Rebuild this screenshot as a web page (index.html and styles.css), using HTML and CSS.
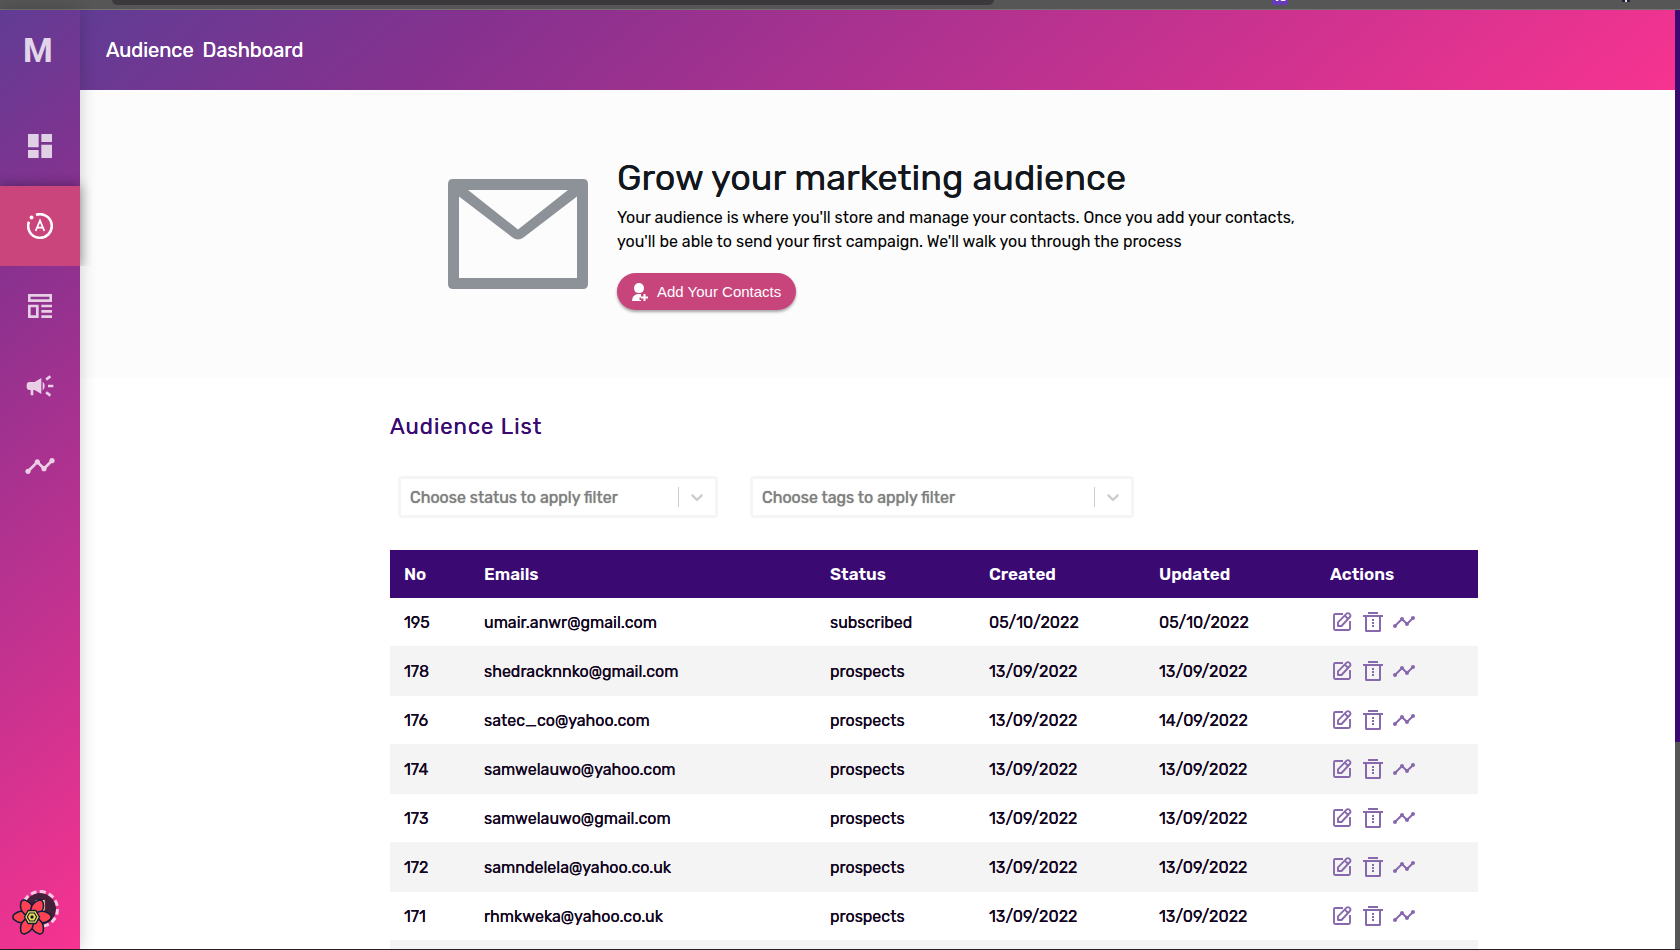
FILE: index.html
```html
<!DOCTYPE html>
<html lang="en">
<head>
    <meta charset="UTF-8">
    <meta name="viewport" content="width=device-width, initial-scale=1.0">
    <title>Audience Dashboard</title>
    <link rel="stylesheet" href="styles.css">
</head>
<body>
    <!-- shared icons -->
    <svg class="icon-defs" aria-hidden="true">
        <symbol id="icon-timeline" viewBox="0 0 24 24">
            <path d="M23 8c0 1.1-.9 2-2 2-.18 0-.35-.02-.51-.07l-3.56 3.55c.05.16.07.34.07.52 0 1.1-.9 2-2 2s-2-.9-2-2c0-.18.02-.36.07-.52l-2.55-2.55c-.16.05-.34.07-.52.07s-.36-.02-.52-.07l-4.55 4.56c.05.16.07.33.07.51 0 1.1-.9 2-2 2s-2-.9-2-2 .9-2 2-2c.18 0 .35.02.51.07l4.56-4.55C8.02 9.36 8 9.18 8 9c0-1.1.9-2 2-2s2 .9 2 2c0 .18-.02.36-.07.52l2.55 2.55c.16-.05.34-.07.52-.07s.36.02.52.07l3.55-3.56C19.02 8.35 19 8.18 19 8c0-1.1.9-2 2-2s2 .9 2 2z"/>
        </symbol>
        <symbol id="icon-edit" viewBox="0 0 24 24">
            <g fill="none" stroke="currentColor" stroke-width="1.9" stroke-linejoin="round">
                <path d="M13 4H5.200Q4 4 4 5.200v13.600Q4 20 5.200 20h13.600q1.200 0 1.200-1.200V11"/>
                <path d="M8 16v-3.700l8.600-8.600a1.900 1.900 0 0 1 2.700 0l.600.600a1.900 1.900 0 0 1 0 2.700L11.500 16z"/>
                <path d="M14.800 5.600l3.400 3.400"/>
            </g>
        </symbol>
        <symbol id="icon-trash" viewBox="0 0 24 24">
            <path d="M7 2h10v2H7zM2 5h20v2h-2v13.500q0 1.500-1.500 1.500h-13Q4 22 4 20.500V7H2zm4 2v13h12V7zM11 9h2v2h-2zM11 12h2v2h-2zM11 15h2v2h-2z"/>
        </symbol>
        <symbol id="icon-chevron" viewBox="0 0 20 20">
            <path d="M4.516 7.548c0.436-0.446 1.043-0.481 1.576 0l3.908 3.747 3.908-3.747c0.533-0.481 1.141-0.446 1.574 0 0.436 0.445 0.408 1.197 0 1.615-0.406 0.418-4.695 4.502-4.695 4.502-0.217 0.223-0.502 0.335-0.787 0.335s-0.570-0.112-0.789-0.335c0 0-4.287-4.084-4.695-4.502s-0.436-1.170 0-1.615z"/>
        </symbol>
    </svg>

    <div class="browser-bar">
        <div class="address"></div>
        <div class="ext-badge">10</div>
        <div class="ext-dot"></div>
    </div>

    <div class="app">
        <nav class="sidebar">
            <a href="#" class="logo">M</a>
            <a href="#" class="nav-item" aria-label="Dashboard">
                <svg viewBox="0 0 24 24"><path d="M3 13h8V3H3v10zm0 8h8v-6H3v6zm10 0h8V11h-8v10zm0-18v6h8V3h-8z"/></svg>
            </a>
            <a href="#" class="nav-item active" aria-label="Audience">
                <svg viewBox="0 0 24 24">
                    <g fill="none" stroke="currentColor">
                        <path d="M8.300 1.750A10.900 10.900 0 1 1 1.800 8.100" stroke-width="2.400"/>
                        <path d="M8 16.500L12 7l4 9.500M9.400 13.400h5.200" stroke-width="1.600"/>
                    </g>
                    <circle cx="4.200" cy="4.200" r="1.800"/>
                </svg>
            </a>
            <a href="#" class="nav-item" aria-label="Templates">
                <svg viewBox="0 0 24 24"><path fill-rule="evenodd" d="M3 3h18v6H3zm2 2v2h14V5zM3 11h8v10H3zm2 2v6h4v-6zM13 11h8v2h-8zM13 15h8v2h-8zM13 19h8v2h-8z"/></svg>
            </a>
            <a href="#" class="nav-item" aria-label="Campaigns">
                <svg viewBox="0 0 24 24"><path d="M18 11v2h4v-2h-4zm-2 6.610c.960.710 2.210 1.650 3.200 2.390.400-.530.800-1.070 1.200-1.600-.990-.740-2.240-1.680-3.200-2.400-.400.540-.800 1.080-1.200 1.610zM20.400 5.600c-.400-.530-.800-1.070-1.200-1.600-.990.740-2.240 1.680-3.200 2.400.400.530.800 1.070 1.200 1.600.960-.720 2.210-1.650 3.200-2.400zM4 9c-1.100 0-2 .900-2 2v2c0 1.100.900 2 2 2h1v4h2v-4h1l5 3V6L8 9H4zm11.500 3c0-1.330-.580-2.530-1.500-3.350v6.690c.920-.810 1.500-2.010 1.500-3.340z"/></svg>
            </a>
            <a href="#" class="nav-item" aria-label="Reports">
                <svg><use href="#icon-timeline"/></svg>
            </a>
            <div class="avatar">J</div>
            <button type="button" class="devtools" aria-label="Open query devtools">
                <svg viewBox="0 0 40 38">
                    <g fill="#ff4154" stroke="#0b1f3a" stroke-width="1.500" stroke-linejoin="round">
                        <path id="petal" d="M20 19L14 14Q7 11.500 1.500 17Q0 19 1.500 21Q7 26.500 14 24z"/>
                        <use href="#petal" transform="rotate(60 20 19)"/>
                        <use href="#petal" transform="rotate(120 20 19)"/>
                        <use href="#petal" transform="rotate(180 20 19)"/>
                        <use href="#petal" transform="rotate(240 20 19)"/>
                        <use href="#petal" transform="rotate(300 20 19)"/>
                    </g>
                    <path d="M12.500 19l3.700-6.500h7.600l3.700 6.500-3.700 6.500h-7.600z" fill="#f5dc55" stroke="#0b1f3a" stroke-width="1.400"/>
                    <path d="M15.300 19l2.300-4h4.800l2.300 4-2.300 4h-4.800z" fill="none" stroke="#0b1f3a" stroke-width="1.200"/>
                    <circle cx="20" cy="19" r="1.700" fill="#0b1f3a"/>
                </svg>
            </button>
        </nav>

        <main class="main">
            <header class="topbar">
                <span>Audience</span>
                <span>Dashboard</span>
            </header>

            <section class="hero">
                <svg class="hero-icon" viewBox="0 0 140 110">
                    <path fill-rule="evenodd" d="M5 0h130q5 0 5 5v100q0 5-5 5H5q-5 0-5-5V5Q0 0 5 0zM11 17.500V99h118V17.500L75.500 58.500q-5.500 4-11 0zM20 11l50 39.500L120 11z"/>
                </svg>
                <div class="hero-text">
                    <h1>Grow your marketing audience</h1>
                    <p>Your audience is where you'll store and manage your contacts. Once you add your contacts,<br>you'll be able to send your first campaign. We'll walk you through the process</p>
                    <button type="button" class="add-btn">
                        <svg viewBox="0 0 18 20"><path d="M8 1a5 5 0 0 1 5 5q0 5-5 5T3 6a5 5 0 0 1 5-5zM1 19q0-6 6-7h3v3.500H8.500V18H10v1zM12.500 12h2v2.500H17v2h-2.500V19h-2v-2.500H10v-2h2.500z"/></svg>
                        Add Your Contacts
                    </button>
                </div>
            </section>

            <section class="audience">
                <h2>Audience List</h2>
                <div class="filters">
                    <div class="filter status-filter">
                        <select aria-label="Status filter"><option>Choose status to apply filter</option></select>
                        <svg><use href="#icon-chevron"/></svg>
                    </div>
                    <div class="filter tags-filter">
                        <select aria-label="Tags filter"><option>Choose tags to apply filter</option></select>
                        <svg><use href="#icon-chevron"/></svg>
                    </div>
                </div>

                <table class="audience-table">
                    <colgroup>
                        <col class="col-no">
                        <col class="col-email">
                        <col class="col-status">
                        <col class="col-created">
                        <col class="col-updated">
                        <col class="col-actions">
                    </colgroup>
                    <thead>
                        <tr><th>No</th><th>Emails</th><th>Status</th><th>Created</th><th>Updated</th><th>Actions</th></tr>
                    </thead>
                    <tbody id="audienceRows"></tbody>
                </table>
            </section>
        </main>

        <div class="scrollbar"><div class="thumb"></div></div>
    </div>
    <div class="taskbar"></div>

    <script>
        const contacts = [
            ['195', 'umair.anwr@gmail.com', 'subscribed', '05/10/2022', '05/10/2022'],
            ['178', 'shedracknnko@gmail.com', 'prospects', '13/09/2022', '13/09/2022'],
            ['176', 'satec_co@yahoo.com', 'prospects', '13/09/2022', '14/09/2022'],
            ['174', 'samwelauwo@yahoo.com', 'prospects', '13/09/2022', '13/09/2022'],
            ['173', 'samwelauwo@gmail.com', 'prospects', '13/09/2022', '13/09/2022'],
            ['172', 'samndelela@yahoo.co.uk', 'prospects', '13/09/2022', '13/09/2022'],
            ['171', 'rhmkweka@yahoo.co.uk', 'prospects', '13/09/2022', '13/09/2022']
        ];

        const actions = `
            <div class="actions">
                <button type="button" aria-label="Edit"><svg><use href="#icon-edit"/></svg></button>
                <button type="button" aria-label="Delete"><svg><use href="#icon-trash"/></svg></button>
                <button type="button" aria-label="Activity"><svg><use href="#icon-timeline"/></svg></button>
            </div>`;

        const body = document.getElementById('audienceRows');
        contacts.forEach(function(contact) {
            const cells = contact.map(value => `<td>${value}</td>`).join('');
            body.insertAdjacentHTML('beforeend', `<tr>${cells}<td>${actions}</td></tr>`);
        });
        body.insertAdjacentHTML('beforeend', '<tr><td colspan="6"></td></tr>');
    </script>
</body>
</html>
```
FILE: styles.css
```css
* {
    margin: 0;
    padding: 0;
    box-sizing: border-box;
}

body {
    display: flex;
    flex-direction: column;
    height: 100vh;
    overflow: hidden;
    font-family: Rubik, Roboto, sans-serif;
    font-size: 16px;
    background: #fff;
    color: #000;
}

button {
    border: none;
    background: none;
    cursor: pointer;
}

svg {
    display: block;
    fill: currentColor;
}

.icon-defs {
    position: absolute;
    width: 0;
    height: 0;
}

/* browser strip */
.browser-bar {
    position: relative;
    flex: none;
    height: 10px;
    background: #565656;
    border-bottom: 1px solid #757570;
    overflow: hidden;
}

.address {
    width: 882px;
    height: 5px;
    margin-left: 112px;
    background: #3b393c;
    border-radius: 0 0 12px 12px;
}

.ext-badge {
    position: absolute;
    left: 1272px;
    bottom: 4px;
    width: 16px;
    height: 14px;
    border-radius: 2px;
    background: #673ab7;
    color: #fff;
    font-size: 12px;
    font-weight: 700;
    line-height: 13px;
    text-align: center;
}

.ext-dot {
    position: absolute;
    left: 1622px;
    top: 0;
    width: 8px;
    height: 2px;
    background: #dde;
    border: solid #223;
    border-width: 0 3px;
}

.app {
    display: flex;
    flex: 1;
    min-height: 0;
}

/* sidebar */
.sidebar {
    position: relative;
    z-index: 2;
    flex: none;
    width: 80px;
    background: linear-gradient(140deg, #613c94, #87318f 25%, #f73390);
    box-shadow: 0 0 16px rgba(0, 0, 0, 0.2);
}

.logo {
    display: flex;
    align-items: center;
    justify-content: center;
    height: 80px;
    margin-bottom: 16px;
    padding-right: 4px;
    color: #e2d5e9;
    font-family: Roboto, sans-serif;
    font-size: 34px;
    font-weight: 700;
    text-decoration: none;
}

.nav-item {
    display: flex;
    align-items: center;
    justify-content: center;
    height: 80px;
    color: rgba(255, 255, 255, 0.77);
}

.nav-item svg {
    width: 32px;
    height: 32px;
}

.nav-item.active {
    background: #c9457b;
    color: #fff;
    box-shadow: 0 0 12px rgba(0, 0, 0, 0.4);
    clip-path: inset(-12px -12px 0 0);
}

.nav-item.active svg {
    width: 26px;
    height: 26px;
}

.avatar {
    position: absolute;
    left: 21px;
    bottom: 21px;
    width: 38px;
    height: 38px;
    border: 3px dashed #f9c8e2;
    border-radius: 50%;
    background: #45203a;
    background-clip: padding-box;
    color: #e8d5e3;
    font-size: 18px;
    font-weight: 500;
    line-height: 28px;
    text-align: center;
}

.devtools {
    position: absolute;
    left: 12px;
    bottom: 13px;
    width: 40px;
    height: 38px;
}

.devtools svg {
    overflow: visible;
}

/* main */
.main {
    flex: 1;
    min-width: 0;
    overflow: hidden;
}

.topbar {
    display: flex;
    align-items: center;
    gap: 9px;
    height: 80px;
    padding-left: 26px;
    background: linear-gradient(140deg, #613c94, #87318f 25%, #f73390);
    color: #fff;
    font-size: 20px;
    text-shadow: 0 0 0 #fff;
}

.hero {
    display: flex;
    gap: 29px;
    height: 288px;
    padding: 66px 0 0 368px;
    background: #fcfcfc;
}

.hero-icon {
    flex: none;
    width: 140px;
    height: 110px;
    margin-top: 23px;
    color: #8d9299;
}

.hero h1 {
    color: #12171d;
    font-size: 36px;
    font-weight: 400;
    line-height: 44px;
    text-shadow: 0 0 0 #12171d;
}

.hero p {
    margin-top: 6px;
    font-size: 16px;
    line-height: 24px;
    white-space: nowrap;
}

.add-btn {
    display: flex;
    align-items: center;
    gap: 8px;
    height: 37px;
    margin-top: 19px;
    padding: 0 15px 0 14px;
    border-radius: 19px;
    background: #c8457c;
    box-shadow: 0 2px 3px rgba(0, 0, 0, 0.35);
    color: #fff;
    font-family: "Liberation Sans", Arial, sans-serif;
    font-size: 15px;
}

.add-btn svg {
    width: 18px;
    height: 20px;
}

.audience {
    padding: 36px 197px 0 310px;
}

.audience h2 {
    color: #3a0a72;
    font-size: 22px;
    font-weight: 400;
    line-height: 26px;
    letter-spacing: 1px;
    text-shadow: 0 0 0 #3a0a72;
}

.filters {
    display: flex;
    gap: 32px;
    margin: 36px 8px 32px;
}

.filter {
    position: relative;
    height: 42px;
}

.status-filter {
    width: 320px;
}

.tags-filter {
    width: 384px;
}

.filter select {
    appearance: none;
    width: 100%;
    height: 100%;
    padding: 0 50px 0 9px;
    border: 3px solid #f5f5f5;
    border-radius: 4px;
    background: #fff;
    color: #808080;
    font-family: inherit;
    font-size: 16px;
    text-shadow: 0 0 1px #808080;
}

.filter svg {
    position: absolute;
    right: 3px;
    top: 11px;
    width: 37px;
    height: 20px;
    border-left: 1px solid #ccc;
    color: #ccc;
    pointer-events: none;
}

/* table */
.audience-table {
    width: 100%;
    table-layout: fixed;
    border-collapse: separate;
    border-spacing: 0;
}

.col-no {
    width: 80px;
}

.col-status {
    width: 159px;
}

.col-created {
    width: 170px;
}

.col-updated {
    width: 171px;
}

.col-actions {
    width: 162px;
}

.audience-table th {
    height: 48px;
    padding: 0 14px;
    background: #3a0a72;
    color: #fff;
    font-size: 17px;
    font-weight: 600;
    text-align: left;
}

.audience-table td {
    height: 49px;
    padding: 0 14px;
    border-bottom: 1px solid #f4f4f4;
    color: #12051f;
    font-size: 16px;
    text-shadow: 0 0 0 #12051f;
}

.audience-table tbody tr:nth-child(even) {
    background: #f4f4f4;
}

.actions {
    display: flex;
    gap: 7px;
}

.actions button {
    width: 24px;
    height: 24px;
    color: #8868ac;
}

.actions svg {
    width: 24px;
    height: 24px;
}

/* page scrollbar and taskbar edge */
.scrollbar {
    flex: none;
    width: 5px;
    background: #555;
}

.thumb {
    height: 78%;
    background: #3a0a72;
}

.taskbar {
    flex: none;
    height: 1px;
    background: #222;
}
```
